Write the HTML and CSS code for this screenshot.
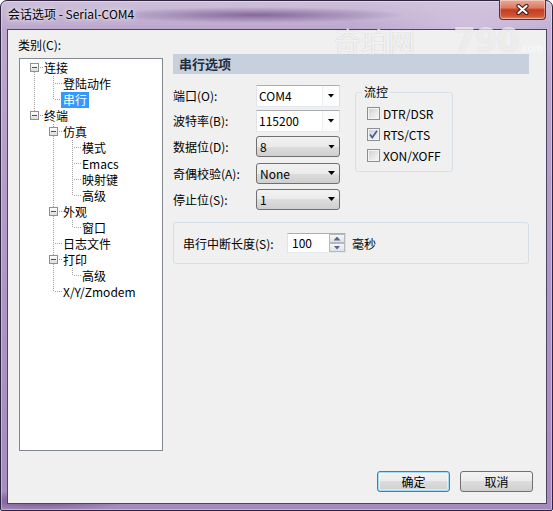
FILE: index.html
```html
<!DOCTYPE html>
<html lang="zh-CN">
<head>
<meta charset="utf-8">
<title>会话选项 - Serial-COM4</title>
<link rel="stylesheet" href="styles.css">
</head>
<body>
<div class="window">
  <div class="titlebar">
    <span class="title">会话选项 - Serial-COM4</span>
    <button class="close" aria-label="关闭"><svg width="13" height="11" viewBox="0 0 13 11"><path d="M2.5 2 L10.5 9 M10.5 2 L2.5 9" stroke="#3b1712" stroke-width="4.2" stroke-linecap="round" fill="none"/><path d="M2.5 2 L10.5 9 M10.5 2 L2.5 9" stroke="#ffffff" stroke-width="2.2" stroke-linecap="round" fill="none"/></svg></button>
  </div>
  <div class="client">
    <div class="main">
      <div class="left">
        <div class="cat-label">类别(C):</div>
        <div class="tree">
          <div class="row"><span class="c exp down"><i></i></span><span class="lbl">连接</span></div>
          <div class="row"><span class="c pipe"></span><span class="c tee"></span><span class="lbl">登陆动作</span></div>
          <div class="row"><span class="c pipe"></span><span class="c elbow"></span><span class="lbl sel">串行</span></div>
          <div class="row"><span class="c exp up"><i></i></span><span class="lbl">终端</span></div>
          <div class="row"><span class="c"></span><span class="c exp both"><i></i></span><span class="lbl">仿真</span></div>
          <div class="row"><span class="c"></span><span class="c pipe"></span><span class="c tee"></span><span class="lbl">模式</span></div>
          <div class="row"><span class="c"></span><span class="c pipe"></span><span class="c tee"></span><span class="lbl">Emacs</span></div>
          <div class="row"><span class="c"></span><span class="c pipe"></span><span class="c tee"></span><span class="lbl">映射键</span></div>
          <div class="row"><span class="c"></span><span class="c pipe"></span><span class="c elbow"></span><span class="lbl">高级</span></div>
          <div class="row"><span class="c"></span><span class="c exp both"><i></i></span><span class="lbl">外观</span></div>
          <div class="row"><span class="c"></span><span class="c pipe"></span><span class="c elbow"></span><span class="lbl">窗口</span></div>
          <div class="row"><span class="c"></span><span class="c tee"></span><span class="lbl">日志文件</span></div>
          <div class="row"><span class="c"></span><span class="c exp both"><i></i></span><span class="lbl">打印</span></div>
          <div class="row"><span class="c"></span><span class="c pipe"></span><span class="c elbow"></span><span class="lbl">高级</span></div>
          <div class="row"><span class="c"></span><span class="c elbow"></span><span class="lbl">X/Y/Zmodem</span></div>
        </div>
      </div>
      <div class="right">
        <div class="section-head">串行选项</div>
        <div class="form-area">
          <div class="form">
            <span class="flabel">端口(O):</span>
            <div class="combo edit"><span class="val">COM4</span><span class="dbtn"><i class="arrow"></i></span></div>
            <span class="flabel">波特率(B):</span>
            <div class="combo edit"><span class="val">115200</span><span class="dbtn"><i class="arrow"></i></span></div>
            <span class="flabel">数据位(D):</span>
            <div class="combo drop"><span class="val">8</span><i class="arrow"></i></div>
            <span class="flabel">奇偶校验(A):</span>
            <div class="combo drop"><span class="val">None</span><i class="arrow"></i></div>
            <span class="flabel">停止位(S):</span>
            <div class="combo drop"><span class="val">1</span><i class="arrow"></i></div>
          </div>
          <fieldset class="flow">
            <legend>流控</legend>
            <div class="checks">
              <div class="chk"><span class="box"></span><span>DTR/DSR</span></div>
              <div class="chk"><span class="box checked"><svg width="11" height="11" viewBox="0 0 11 11"><path d="M2 5.5 L4.3 8.6 L9 1.8" stroke="#4a5c92" stroke-width="1.7" fill="none"/></svg></span><span>RTS/CTS</span></div>
              <div class="chk"><span class="box"></span><span>XON/XOFF</span></div>
            </div>
          </fieldset>
        </div>
        <div class="break-box">
          <span class="break-label">串行中断长度(S):</span>
          <div class="spin">
            <span class="sval">100</span>
            <span class="sbtns"><span class="sb"><i class="tri up"></i></span><span class="sb"><i class="tri down"></i></span></span>
          </div>
          <span class="unit">毫秒</span>
        </div>
      </div>
    </div>
    <div class="footer">
      <button class="push default">确定</button>
      <button class="push">取消</button>
    </div>
  </div>
  <div class="wm" aria-hidden="true"><span class="wm-cn">奇珀网</span><span class="wm-num">790</span><span class="wm-com">.com</span></div>
</div>
</body>
</html>
```

FILE: styles.css
```css
* { box-sizing: border-box; }
html, body { margin: 0; padding: 0; }
body {
  width: 553px;
  height: 511px;
  overflow: hidden;
  background: #ffffff;
  font-family: "Noto Sans CJK SC", "Noto Sans", sans-serif;
  font-size: 12px;
  color: #000;
}

.window {
  position: relative;
  width: 553px;
  height: 511px;
  display: flex;
  flex-direction: column;
  padding: 0 5px 6px 6px;
  border: 1px solid #2e2440;
  border-radius: 7px 7px 2px 2px;
  background:
    radial-gradient(ellipse 150px 8px at 255px 14px, rgba(82, 42, 108, 0.55), rgba(82, 42, 108, 0) 100%),
    radial-gradient(ellipse 90px 10px at 40px 500px, rgba(60, 30, 90, 0.5), rgba(60, 30, 90, 0) 100%),
    radial-gradient(ellipse 120px 60px at 470px 30px, rgba(225, 212, 235, 0.5), rgba(225, 212, 235, 0)),
    linear-gradient(to bottom, #cdbfda 0, #bca8cd 28px, #ad95c4 60%, #a68bbf 100%);
  box-shadow: inset 0 0 0 1px rgba(255, 255, 255, 0.35);
}

.titlebar {
  height: 28px;
  display: flex;
  align-items: flex-start;
  justify-content: space-between;
}
.title {
  margin-top: 5px;
  padding-left: 1px;
  line-height: 16px;
  text-shadow: 0 0 6px rgba(255, 255, 255, 0.9), 0 0 3px rgba(255, 255, 255, 0.7);
}
.close {
  width: 47px;
  height: 20px;
  margin: -1px 1px 0 0;
  padding: 0;
  display: flex;
  align-items: center;
  justify-content: center;
  border: 1px solid #6b2a20;
  border-top: none;
  border-radius: 0 0 4px 4px;
  background: linear-gradient(#e9a99a 0, #dc7d64 40%, #c63d20 52%, #cd5536 85%, #e38c72 100%);
  box-shadow: inset 0 0 0 1px rgba(255, 255, 255, 0.35);
}

.client {
  flex: 1;
  display: flex;
  flex-direction: column;
  border: 1px solid #4c4460;
  background: #f0f0f0;
  min-height: 0;
}
.main {
  flex: 1;
  display: flex;
  padding-left: 11px;
  min-height: 0;
}

/* left: category tree */
.left {
  width: 144px;
  display: flex;
  flex-direction: column;
}
.cat-label {
  height: 28px;
  padding-top: 8px;
  margin-left: -1px;
  line-height: 14px;
}
.tree {
  height: 393px;
  background: #fff;
  border: 1px solid #828790;
  padding: 1px 0 0 5px;
}
.row {
  display: flex;
  height: 16px;
}
.c {
  width: 19px;
  height: 16px;
  flex: none;
}
.lbl {
  line-height: 16px;
  height: 16px;
  padding: 0 1px;
  margin-left: -1px;
  white-space: nowrap;
}
.lbl.sel {
  background: #3399ff;
  color: #fff;
  padding: 0 2px;
  margin-left: -2px;
}
.pipe {
  background: repeating-linear-gradient(to bottom, #a0a0a0 0 1px, transparent 1px 2px) 9px 0 / 1px 16px no-repeat;
}
.tee {
  background:
    repeating-linear-gradient(to right, #a0a0a0 0 1px, transparent 1px 2px) 11px 7px / 8px 1px no-repeat,
    repeating-linear-gradient(to bottom, #a0a0a0 0 1px, transparent 1px 2px) 9px 0 / 1px 16px no-repeat;
}
.elbow {
  background:
    repeating-linear-gradient(to right, #a0a0a0 0 1px, transparent 1px 2px) 11px 7px / 8px 1px no-repeat,
    repeating-linear-gradient(to bottom, #a0a0a0 0 1px, transparent 1px 2px) 9px 0 / 1px 8px no-repeat;
}
.exp.down {
  background:
    repeating-linear-gradient(to right, #a0a0a0 0 1px, transparent 1px 2px) 15px 7px / 4px 1px no-repeat,
    repeating-linear-gradient(to bottom, #a0a0a0 0 1px, transparent 1px 2px) 9px 12px / 1px 4px no-repeat;
}
.exp.up {
  background:
    repeating-linear-gradient(to right, #a0a0a0 0 1px, transparent 1px 2px) 15px 7px / 4px 1px no-repeat,
    repeating-linear-gradient(to bottom, #a0a0a0 0 1px, transparent 1px 2px) 9px 0 / 1px 3px no-repeat;
}
.exp.both {
  background:
    repeating-linear-gradient(to right, #a0a0a0 0 1px, transparent 1px 2px) 15px 7px / 4px 1px no-repeat,
    repeating-linear-gradient(to bottom, #a0a0a0 0 1px, transparent 1px 2px) 9px 0 / 1px 16px no-repeat;
}
.exp i {
  display: block;
  width: 9px;
  height: 9px;
  margin: 3px 0 0 5px;
  border: 1px solid #919191;
  background:
    linear-gradient(#2c4f9e, #2c4f9e) center / 5px 1px no-repeat,
    linear-gradient(#ffffff, #dcdcdc);
}

/* right panel */
.right {
  margin-left: 10px;
  width: 356px;
  padding-top: 24px;
  display: flex;
  flex-direction: column;
}
.section-head {
  height: 20px;
  background: #c6d1dd;
  padding-left: 6px;
  font-weight: bold;
  font-size: 13px;
  line-height: 20px;
  color: #1f2d3d;
}
.form-area {
  display: flex;
  align-items: flex-start;
  margin-top: 9px;
}
.form {
  display: grid;
  grid-template-columns: 83px 84px;
  grid-template-rows: 25px 25px 27px 26px 26px;
  align-items: center;
}
.flabel { white-space: nowrap; }
.combo {
  height: 22px;
  display: flex;
  align-items: center;
  justify-content: space-between;
}
.combo.edit {
  background: #fff;
  border: 1px solid #abadb3;
  border-color: #abadb3 #dbdfe6 #e3e9ef #e2e3ea;
  padding-left: 2px;
}
.dbtn {
  width: 17px;
  height: 100%;
  display: flex;
  align-items: center;
  justify-content: center;
  border-left: 1px solid #eceef2;
  background: #fcfcfc;
}
.combo.drop {
  height: 21px;
  border: 1px solid #707070;
  border-radius: 3px;
  background: linear-gradient(#f2f2f2 0, #ebebeb 50%, #dddddd 50%, #cfcfcf 100%);
  padding: 0 4px 0 3px;
}
.arrow {
  display: block;
  width: 7px;
  height: 4px;
  background: #000;
  clip-path: polygon(0 0, 100% 0, 50% 100%);
}

.flow {
  margin: 2px 0 0 15px;
  padding: 0 0 5px 0;
  width: 98px;
  min-width: 0;
  border: 1px solid #d5dfe5;
  border-radius: 3px;
}
.flow legend {
  margin-left: 6px;
  padding: 0 2px;
  line-height: 14px;
}
.checks {
  padding: 4px 0 0 11px;
}
.chk {
  height: 21px;
  display: flex;
  align-items: center;
  gap: 3px;
  white-space: nowrap;
}
.box {
  width: 13px;
  height: 13px;
  flex: none;
  display: flex;
  align-items: center;
  justify-content: center;
  border: 1px solid #8e8f8f;
  background: linear-gradient(135deg, #c9cdd3 0, #e6e7e9 55%, #f7f7f7 100%);
  box-shadow: inset 0 0 0 1px #f4f4f4;
}

.break-box {
  margin-top: 10px;
  height: 42px;
  border: 1px solid #d5dfe5;
  border-radius: 3px;
  display: flex;
  align-items: center;
  padding-left: 9px;
}
.break-label { width: 104px; white-space: nowrap; }
.spin {
  width: 59px;
  height: 20px;
  display: flex;
  border: 1px solid #abadb3;
  border-color: #abadb3 #dbdfe6 #e3e9ef #e2e3ea;
  background: #fff;
}
.sval {
  flex: 1;
  padding-left: 4px;
  line-height: 18px;
}
.sbtns {
  width: 16px;
  display: flex;
  flex-direction: column;
}
.sb {
  flex: 1;
  display: flex;
  align-items: center;
  justify-content: center;
  border: 1px solid #b5b8bd;
  background: linear-gradient(#f7f7f7, #dfe1e4);
}
.tri {
  display: block;
  width: 7px;
  height: 4px;
  background: #55688c;
}
.tri.up { clip-path: polygon(50% 0, 100% 100%, 0 100%); }
.tri.down { clip-path: polygon(0 0, 100% 0, 50% 100%); }
.unit { margin-left: 6px; }

/* footer */
.footer {
  display: flex;
  justify-content: flex-end;
  gap: 10px;
  padding: 0 13px 11px 0;
}
.push {
  width: 73px;
  height: 21px;
  padding: 0;
  border: 1px solid #707070;
  border-radius: 3px;
  background: linear-gradient(#f2f2f2 0, #ebebeb 50%, #dddddd 50%, #cfcfcf 100%);
  font: inherit;
  color: #000;
  display: flex;
  align-items: center;
  justify-content: center;
}
.push.default {
  border-color: #3c7fb1;
  box-shadow: inset 0 0 0 1px #a5dcf6, inset 0 0 0 2px rgba(255, 255, 255, 0.45);
}

/* watermark overlay */
.wm {
  position: absolute;
  left: 333px;
  top: 23px;
  display: flex;
  align-items: baseline;
  pointer-events: none;
}
.wm-cn {
  font-size: 27px;
  line-height: 34px;
  color: rgba(255, 255, 255, 0.8);
  text-shadow: 0 0 1px rgba(120, 120, 120, 0.45);
}
.wm-num {
  margin-left: 38px;
  font-family: "DejaVu Sans", sans-serif;
  font-weight: bold;
  font-size: 33px;
  line-height: 34px;
  letter-spacing: -1px;
  color: rgba(255, 255, 255, 0.6);
  text-shadow: 0 0 1px rgba(140, 140, 140, 0.3);
}
.wm-com {
  margin-left: 1px;
  font-size: 10px;
  color: rgba(255, 255, 255, 0.65);
}
```
